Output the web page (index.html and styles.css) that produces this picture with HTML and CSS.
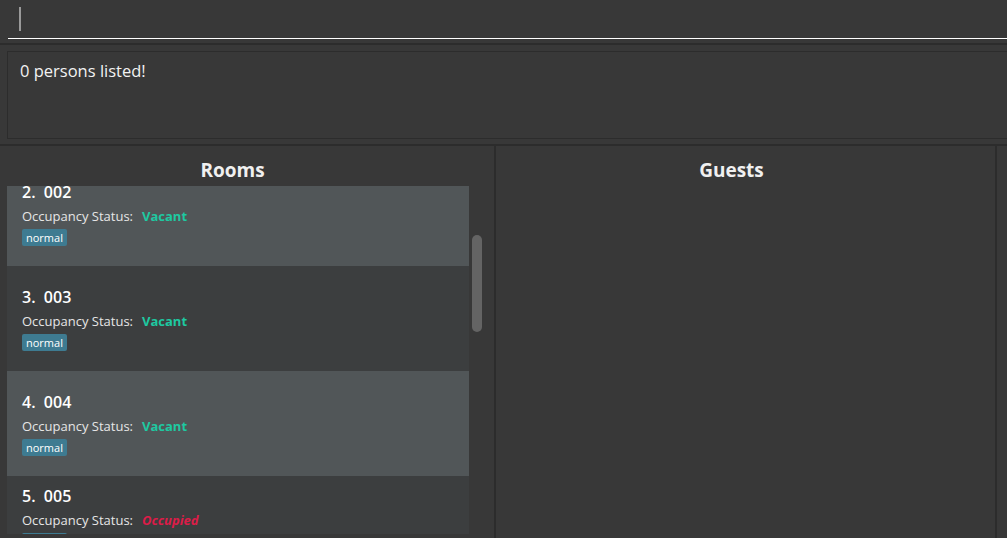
FILE: index.html
```html
<!DOCTYPE html>
<html>
<head>
<meta charset="utf-8">
<link rel="stylesheet" href="styles.css">
</head>
<body>
<div class="app">
  <div class="command">
    <div class="command-input"><span class="caret"></span></div>
  </div>
  <div class="result-wrap">
    <div class="result">0 persons listed!</div>
  </div>
  <div class="panels">
    <section class="panel rooms">
      <div class="panel-head">Rooms</div>
      <div class="list-wrap">
        <div class="list">
          <div class="card odd">
            <div class="card-title">2.&nbsp;&nbsp;002</div>
            <div class="card-status">Occupancy Status:<span class="vacant">Vacant</span></div>
            <div class="tags"><span class="tag">normal</span></div>
          </div>
          <div class="card even">
            <div class="card-title">3.&nbsp;&nbsp;003</div>
            <div class="card-status">Occupancy Status:<span class="vacant">Vacant</span></div>
            <div class="tags"><span class="tag">normal</span></div>
          </div>
          <div class="card odd">
            <div class="card-title">4.&nbsp;&nbsp;004</div>
            <div class="card-status">Occupancy Status:<span class="vacant">Vacant</span></div>
            <div class="tags"><span class="tag">normal</span></div>
          </div>
          <div class="card even tall">
            <div class="card-title">5.&nbsp;&nbsp;005</div>
            <div class="card-status">Occupancy Status:<span class="occupied">Occupied</span></div>
            <div class="tags"><span class="tag">normal</span></div>
          </div>
        </div>
        <div class="scrollbar"><div class="thumb"></div></div>
      </div>
    </section>
    <section class="panel guests">
      <div class="panel-head">Guests</div>
    </section>
    <section class="panel extra"></section>
  </div>
</div>
</body>
</html>
```

FILE: styles.css
```css
* { box-sizing: border-box; }
html, body {
  margin: 0;
  padding: 0;
  width: 1007px;
  height: 538px;
  overflow: hidden;
  background: #383838;
  font-family: "Open Sans", "Noto Sans", sans-serif;
  color: #ffffff;
}
.app {
  width: 1007px;
  height: 538px;
  display: flex;
  flex-direction: column;
  overflow: hidden;
}
.command {
  height: 45px;
  padding: 0 0 0 8px;
  border-bottom: 2px solid #2c2c2c;
  flex: none;
}
.command-input {
  height: 39px;
  border-bottom: 1px solid #ffffff;
  padding: 7px 0 0 11px;
}
.caret {
  display: block;
  width: 2px;
  height: 24px;
  background: #9a9a9a;
}
.result-wrap {
  height: 101px;
  padding: 6px 0 0 7px;
  border-bottom: 2px solid #2c2c2c;
  flex: none;
}
.result {
  width: 1010px;
  height: 88px;
  border: 1px solid #2c2c2c;
  padding: 7px 12px;
  font-size: 16.5px;
  line-height: 23px;
  color: #f2f2f2;
}
.panels {
  flex: 1;
  display: flex;
  min-height: 0;
}
.panel {
  height: 100%;
  display: flex;
  flex-direction: column;
  border-right: 2px solid #2c2c2c;
  flex: none;
}
.rooms { width: 496px; }
.guests { width: 501px; }
.extra { flex: 1; border-right: none; }
.panel-head {
  height: 40px;
  padding-top: 12px;
  width: 465px;
  text-align: center;
  font-weight: 700;
  font-size: 19px;
  line-height: 25px;
  color: #f0f0f0;
  flex: none;
}
.guests .panel-head { width: 471px; }
.list-wrap {
  flex: 1;
  display: flex;
  min-height: 0;
  padding: 0 0 4px 7px;
}
.list {
  width: 463px;
  overflow: hidden;
}
.card {
  height: 105px;
  padding: 20px 0 0 15px;
}
.card:first-child { margin-top: -25px; }
.card.tall { height: 140px; padding-top: 9px; }
.odd { background: #515658; }
.even { background: #3c3e3f; }
.card-title {
  font-size: 16px;
  line-height: 22px;
  font-weight: 600;
  color: #ffffff;
}
.card-status {
  margin-top: 4px;
  font-size: 13px;
  line-height: 18px;
  color: #e6e6e6;
}
.vacant {
  margin-left: 9px;
  font-weight: 700;
  color: #1ec9a1;
}
.occupied {
  margin-left: 9px;
  font-weight: 700;
  font-style: italic;
  color: #dc1c48;
}
.tags {
  margin-top: 4px;
  display: flex;
}
.tag {
  background: #3e7b91;
  color: #ffffff;
  font-size: 11px;
  line-height: 17px;
  height: 17px;
  padding: 0 4px;
  border-radius: 2px;
}
.scrollbar {
  width: 25px;
  padding: 49px 0 0 3px;
}
.thumb {
  width: 10px;
  height: 97px;
  border-radius: 5px;
  background: #646464;
}
```
